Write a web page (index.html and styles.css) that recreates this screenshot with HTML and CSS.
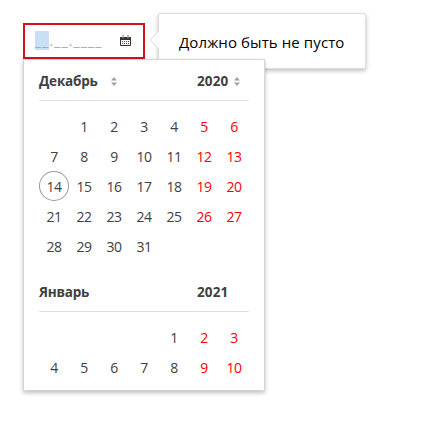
FILE: index.html
```
<!DOCTYPE html>
<html lang="ru">
<head>
<meta charset="utf-8">
<title>Календарь</title>
<link rel="stylesheet" href="styles.css">
</head>
<body>
<main class="field">
  <div class="input">
    <div class="mask"><span class="selected">__</span>.__.____</div>
    <svg class="calendar-icon" width="11" height="12" viewBox="0 0 11 12">
      <path d="M0 2h11v8q0 1-1 1H1q-1 0-1-1z" fill="#333"/>
      <path d="M2.500 0h1v3h-1zM7.500 0h1v3h-1z" fill="#333" stroke="#ddd" stroke-width=".4"/>
      <path d="M1 5h9v5H1z" fill="#f4f4f4"/>
      <path d="M2 6h1v1H2zM4 6h1v1H4zM6 6h1v1H6zM8 6h1v1H8zM2 8h1v1H2zM4 8h1v1H4zM6 8h1v1H6zM8 8h1v1H8z" fill="#555"/>
    </svg>
  </div>
  <div class="tooltip">Должно быть не пусто<svg class="arrow" width="10" height="18" viewBox="0 0 10 18"><path d="M10 0L1 9l9 9" fill="#fff" stroke="#d9d9d9"/></svg></div>
  <section class="calendar">
    <header class="month-head">
      <span class="month">Декабрь</span><svg class="sort" width="6" height="9" viewBox="0 0 6 9"><path d="M3 0l3 3.500H0zM0 5.500h6L3 9z" fill="#a0a0a0"/></svg>
      <span class="year">2020</span><svg class="sort" width="6" height="9" viewBox="0 0 6 9"><path d="M3 0l3 3.500H0zM0 5.500h6L3 9z" fill="#a0a0a0"/></svg>
    </header>
    <div class="days">
      <span></span><span>1</span><span>2</span><span>3</span><span>4</span><span>5</span><span>6</span>
      <span>7</span><span>8</span><span>9</span><span>10</span><span>11</span><span>12</span><span>13</span>
      <span class="today">14</span><span>15</span><span>16</span><span>17</span><span>18</span><span>19</span><span>20</span>
      <span>21</span><span>22</span><span>23</span><span>24</span><span>25</span><span>26</span><span>27</span>
      <span>28</span><span>29</span><span>30</span><span>31</span>
    </div>
    <header class="month-head next">
      <span class="month">Январь</span>
      <span class="year">2021</span>
    </header>
    <div class="days">
      <span></span><span></span><span></span><span></span><span>1</span><span>2</span><span>3</span>
      <span>4</span><span>5</span><span>6</span><span>7</span><span>8</span><span>9</span><span>10</span>
    </div>
  </section>
</main>
</body>
</html>
```
FILE: styles.css
```
* { box-sizing: border-box; }
body {
  min-height: 448px;
  margin: 0;
  padding: 23px 0 0 23px;
  background: #fff;
  color: #404040;
  font: 14px/30px "Open Sans", "Noto Sans", sans-serif;
}
.field {
  position: relative;
  width: 242px;
}
.input {
  display: flex;
  justify-content: space-between;
  width: 122px;
  height: 36px;
  padding: 7px 12px 0 10px;
  border: 2px solid #d70f19;
}
.mask {
  height: 18px;
  line-height: 18px;
  color: #aaa;
  letter-spacing: 1.1px;
  white-space: nowrap;
}
.mask .selected { background: #c9dff5; }
.calendar-icon { margin-top: 3px; }
.tooltip {
  position: absolute;
  left: 135px;
  top: -10px;
  width: 208px;
  height: 56px;
  padding-left: 20px;
  border: 1px solid #ddd;
  border-radius: 2px;
  background: #fff;
  box-shadow: 0 2px 4px rgba(0, 0, 0, .25);
  color: #000;
  font-size: 15px;
  letter-spacing: .1px;
  line-height: 57px;
  white-space: nowrap;
}
.arrow { position: absolute; left: -10px; top: 17px; }
.calendar {
  position: relative;
  height: 332px;
  padding: 7px 15px 0;
  border: 1px solid #d5d5d5;
  background: #fff;
  box-shadow: 0 2px 4px rgba(0, 0, 0, .25);
}
.month-head {
  display: grid;
  grid-template-columns: 72px 86px 37px 15px;
  align-items: center;
  height: 34px;
  margin-bottom: 11px;
  border-bottom: 1px solid #ddd;
  font-size: 13.5px;
  font-weight: 700;
  letter-spacing: -.1px;
}
.month-head .month { grid-column: 1; letter-spacing: -.2px; }
.month-head .year { grid-column: 3; letter-spacing: .1px; }
.month-head span { position: relative; top: -3px; }
.month-head svg { position: relative; top: -2px; }
.month-head.next { margin-top: 16px; }
.days {
  display: grid;
  grid-template-columns: repeat(7, 30px);
  grid-auto-rows: 30px;
  letter-spacing: -.5px;
  text-align: center;
}
.days span:nth-child(7n), .days span:nth-child(7n - 1) { color: #f00; }
.today {
  height: 30px;
  margin-top: -1px;
  padding-top: 1px;
  box-shadow: inset 0 0 0 1px #999;
  border-radius: 50%;
}
```
